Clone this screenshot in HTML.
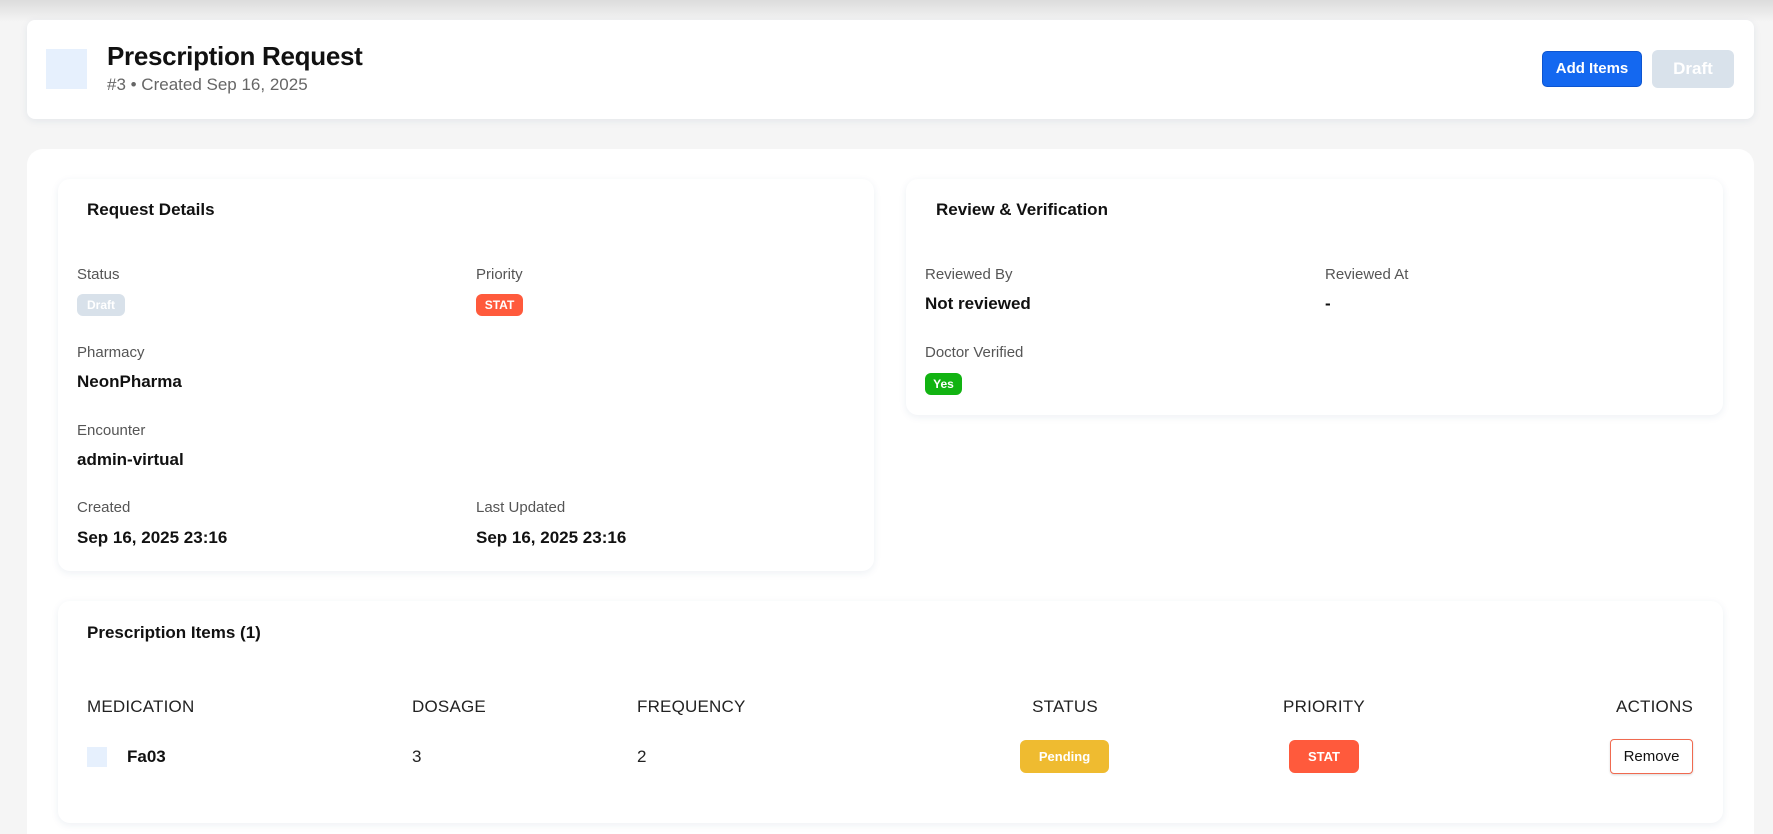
<!DOCTYPE html>
<html style="width:1773px;height:834px;overflow:hidden"><head><meta charset="utf-8"><style>
*{box-sizing:border-box;margin:0;padding:0}
body{width:1773px;height:834px;overflow:hidden;background:#f5f5f5;font-family:"Liberation Sans",Arial,sans-serif;color:#111;position:relative}
.topsh{position:absolute;left:0;top:0;width:1773px;height:22px;background:linear-gradient(#dcdcdc,#f5f5f5)}
.abs{position:absolute}
.card{position:absolute;background:#fff;border-radius:12px;box-shadow:0 2px 8px rgba(30,60,120,.08)}
.lbl{position:absolute;font-size:15px;color:#555}
.val{position:absolute;font-size:17px;font-weight:bold;color:#111}
.badge{position:absolute;height:22px;border-radius:6px;color:#fff;font-size:12px;font-weight:bold;text-align:center;line-height:22px}
.th{position:absolute;top:697px;font-size:17px;color:#222;letter-spacing:.2px}
.td{position:absolute;top:747px;font-size:17px;color:#222}
</style></head><body>
<div class="topsh"></div>
<div class="card" style="left:27px;top:20px;width:1727px;height:99px;border-radius:8px"></div>
<div class="abs" style="left:46px;top:49px;width:41px;height:40px;background:#e6f0fd"></div>
<div class="abs" style="left:107px;top:41px;font-size:26px;font-weight:bold;color:#111;letter-spacing:-0.3px">Prescription Request</div>
<div class="abs" style="left:107px;top:75px;font-size:17px;color:#666">#3 • Created Sep 16, 2025</div>
<div class="abs" style="left:1542px;top:51px;width:100px;height:36px;background:#1468f0;border:1px solid #0d55d0;border-radius:5px;color:#fff;font-size:15px;font-weight:bold;text-align:center;line-height:34px">Add Items</div>
<div class="abs" style="left:1652px;top:50px;width:82px;height:38px;background:#d9e2eb;border-radius:6px;color:#fff;font-size:17px;font-weight:bold;text-align:center;line-height:38px">Draft</div>

<div class="abs" style="left:27px;top:149px;width:1727px;height:685px;border-radius:16px 16px 0 0;background:#fff"></div>

<div class="card" style="left:58px;top:179px;width:816px;height:392px"></div>
<div class="abs" style="left:87px;top:200px;font-size:17px;font-weight:bold">Request Details</div>
<div class="lbl" style="left:77px;top:266px">Status</div>
<div class="badge" style="left:77px;top:294px;width:48px;background:#d8e1ea">Draft</div>
<div class="lbl" style="left:476px;top:266px">Priority</div>
<div class="badge" style="left:476px;top:294px;width:47px;background:#ff5a3c">STAT</div>
<div class="lbl" style="left:77px;top:344px">Pharmacy</div>
<div class="val" style="left:77px;top:372px">NeonPharma</div>
<div class="lbl" style="left:77px;top:422px">Encounter</div>
<div class="val" style="left:77px;top:450px">admin-virtual</div>
<div class="lbl" style="left:77px;top:499px">Created</div>
<div class="val" style="left:77px;top:528px">Sep 16, 2025 23:16</div>
<div class="lbl" style="left:476px;top:499px">Last Updated</div>
<div class="val" style="left:476px;top:528px">Sep 16, 2025 23:16</div>

<div class="card" style="left:906px;top:179px;width:817px;height:236px"></div>
<div class="abs" style="left:936px;top:200px;font-size:17px;font-weight:bold">Review &amp; Verification</div>
<div class="lbl" style="left:925px;top:266px">Reviewed By</div>
<div class="val" style="left:925px;top:294px">Not reviewed</div>
<div class="lbl" style="left:1325px;top:266px">Reviewed At</div>
<div class="val" style="left:1325px;top:294px">-</div>
<div class="lbl" style="left:925px;top:344px">Doctor Verified</div>
<div class="badge" style="left:925px;top:373px;width:37px;background:#12b312">Yes</div>

<div class="card" style="left:58px;top:601px;width:1665px;height:222px"></div>
<div class="abs" style="left:87px;top:623px;font-size:17px;font-weight:bold">Prescription Items (1)</div>
<div class="th" style="left:87px">MEDICATION</div>
<div class="th" style="left:412px">DOSAGE</div>
<div class="th" style="left:637px">FREQUENCY</div>
<div class="th" style="left:1005px;width:120px;text-align:center">STATUS</div>
<div class="th" style="left:1264px;width:120px;text-align:center">PRIORITY</div>
<div class="th" style="left:1553px;width:140px;text-align:right">ACTIONS</div>
<div class="abs" style="left:87px;top:747px;width:20px;height:20px;background:#e6f0fd"></div>
<div class="td" style="left:127px;font-weight:bold;color:#111">Fa03</div>
<div class="td" style="left:412px">3</div>
<div class="td" style="left:637px">2</div>
<div class="badge" style="left:1020px;top:740px;width:89px;height:33px;line-height:33px;background:#efbb30;border-radius:6px;font-size:13px">Pending</div>
<div class="badge" style="left:1289px;top:740px;width:70px;height:33px;line-height:33px;background:#ff5a3c;border-radius:6px;font-size:13px">STAT</div>
<div class="abs" style="left:1610px;top:739px;width:83px;height:35px;border:1px solid #f06a50;border-radius:4px;background:#fff;font-size:15px;color:#111;text-align:center;line-height:33px;box-shadow:0 1px 2px rgba(0,0,0,.15)">Remove</div>
</body></html>
